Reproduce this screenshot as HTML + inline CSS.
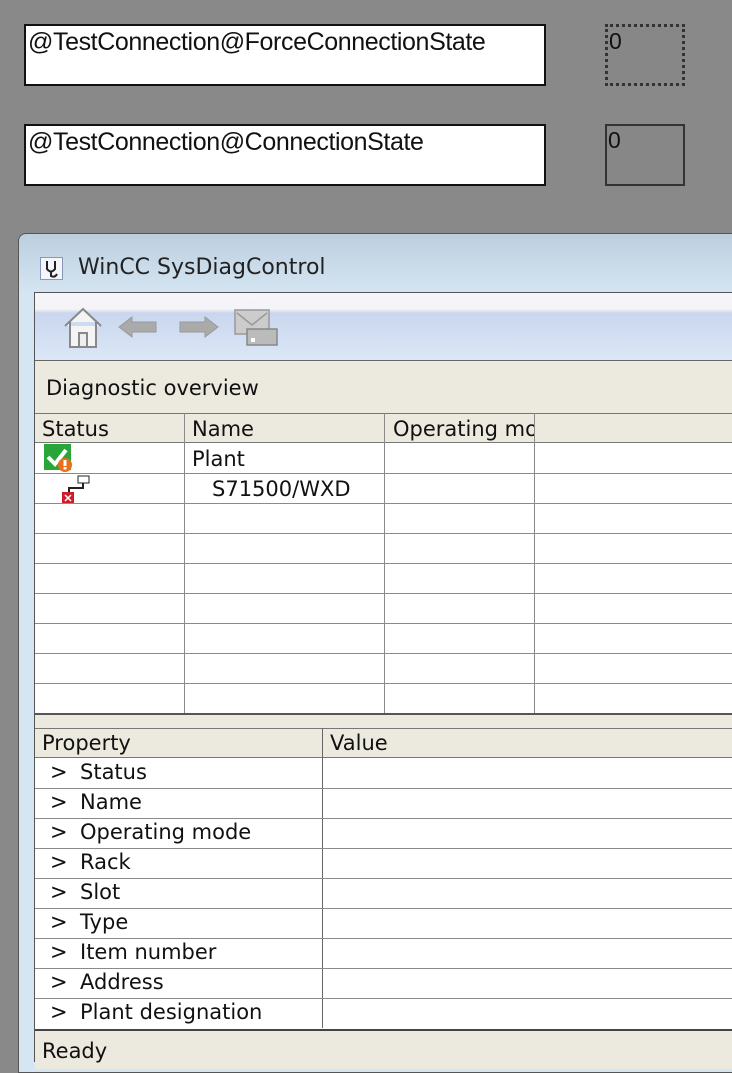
<!DOCTYPE html>
<html><head><meta charset="utf-8"><style>
*{margin:0;padding:0;box-sizing:border-box}
body{width:732px;height:1060px;overflow:hidden;background:#898989;position:relative;font-family:"DejaVu Sans","Liberation Sans",sans-serif}
.a{position:absolute}
.tb{background:#fff;border:2px solid #111;font-family:"Liberation Sans",sans-serif;font-size:25px;line-height:32px;padding-left:2px;color:#111;letter-spacing:-0.4px}
.sb{border:2px solid #333;background:#878787;font-family:"Liberation Sans",sans-serif;font-size:23px;line-height:28px;color:#111;padding-left:1px}
.t{font-size:21px;color:#111;white-space:nowrap}
.hl{height:1px;background:#8a8a8a;left:35px;right:0}
.vl{width:1px;background:#8a8a8a}
.p{position:absolute;left:0;font-size:21px;color:#111;white-space:nowrap}
</style></head><body>
<div class="a tb" style="left:24px;top:24px;width:522px;height:62px">@TestConnection@ForceConnectionState</div>
<div class="a sb" style="left:605px;top:24px;width:80px;height:62px;border:3px dotted #333">0</div>
<div class="a tb" style="left:24px;top:124px;width:522px;height:62px">@TestConnection@ConnectionState</div>
<div class="a sb" style="left:605px;top:124px;width:80px;height:62px">0</div>

<div class="a" style="left:18px;top:233px;width:730px;height:840px;border:1px solid #555;border-radius:8px 0 0 0;background:linear-gradient(#bccfdf,#d5e5f2 60px,#d5e5f2)"></div>
<svg class="a" style="left:40px;top:257px" width="24" height="24"><rect x="0.5" y="0.5" width="22" height="22" fill="#f4f6fb" stroke="#8898b8"/><path d="M7 4 V12 Q11 17 15 12 V4 M11 15 V19 Q15 21 17 17" fill="none" stroke="#222" stroke-width="2"/></svg>
<div class="a t" style="left:78px;top:255px;font-size:22px;color:#222">WinCC SysDiagControl</div>

<div class="a" style="left:34px;top:292px;width:700px;height:770px;border:1px solid #555;background:#fff"></div>
<div class="a" style="left:35px;top:293px;right:0;height:67px;background:linear-gradient(#f6f6fa,#f4f4f8 16px,#c9d6ee 20px,#dce7f6)"></div>
<div class="a" style="left:35px;top:360px;right:0;height:1px;background:#666"></div>
<svg class="a" style="left:62px;top:305px" width="220" height="46" viewBox="0 0 220 46">
 <path d="M3 21 L21 4 L39 21 M8 17 V42 H34 V17" fill="#f4f4f4" stroke="#888" stroke-width="2"/>
 <rect x="17" y="28" width="8" height="14" fill="#eee" stroke="#888" stroke-width="2"/>
 <path d="M57 22 L70 12 V17 H94 V27 H70 V32 Z" fill="#aaa" stroke="#999"/>
 <path d="M156 22 L143 12 V17 H118 V27 H143 V32 Z" fill="#aaa" stroke="#999"/>
 <rect x="173" y="5" width="34" height="24" fill="#ccc" stroke="#999" stroke-width="1.5"/>
 <path d="M175 8 L190 20 L205 8" fill="none" stroke="#999" stroke-width="1.5"/>
 <rect x="185" y="24" width="30" height="16" fill="#bbb" stroke="#888" stroke-width="1.5"/>
 <rect x="189" y="33" width="4" height="4" fill="#fff"/>
</svg>

<div class="a" style="left:35px;top:361px;right:0;height:52px;background:#ece9df"></div>
<div class="a t" style="left:46px;top:376px">Diagnostic overview</div>
<div class="a" style="left:35px;top:413px;right:0;height:30px;background:#ece9df;border-top:1px solid #777;border-bottom:1px solid #777"></div>
<div class="a t" style="left:42px;top:417px">Status</div>
<div class="a t" style="left:192px;top:417px">Name</div>
<div class="a t" style="left:393px;top:417px;width:142px;overflow:hidden">Operating mode</div>
<div class="a vl" style="left:184px;top:413px;height:300px"></div>
<div class="a vl" style="left:384px;top:413px;height:300px"></div>
<div class="a vl" style="left:534px;top:413px;height:300px"></div>
<div class="a hl" style="top:473px"></div><div class="a hl" style="top:503px"></div><div class="a hl" style="top:533px"></div><div class="a hl" style="top:563px"></div><div class="a hl" style="top:593px"></div><div class="a hl" style="top:623px"></div><div class="a hl" style="top:653px"></div><div class="a hl" style="top:683px"></div>
<div class="a t" style="left:192px;top:447px">Plant</div>
<div class="a t" style="left:212px;top:477px">S71500/WXD</div>
<svg class="a" style="left:44px;top:444px" width="30" height="28"><rect x="0" y="0" width="27" height="26" fill="#2aa53a"/><path d="M4 13 L11 20 L22 6" fill="none" stroke="#fff" stroke-width="4"/><circle cx="21" cy="21" r="7" fill="#e8701c"/><rect x="19.5" y="16" width="3" height="6" fill="#fff"/><rect x="19.5" y="23" width="3" height="2.5" fill="#fff"/></svg>
<svg class="a" style="left:60px;top:474px" width="34" height="30"><rect x="18" y="2" width="11" height="7" fill="#fff" stroke="#222"/><path d="M23 9 V14 H9 V20" fill="none" stroke="#222" stroke-width="2"/><rect x="2" y="18" width="12" height="11" fill="#d01c2a"/><path d="M5 21 L11 27 M11 21 L5 27" stroke="#fff" stroke-width="1.5"/></svg>

<div class="a" style="left:35px;top:713px;right:0;height:15px;background:#ece9df;border-top:2px solid #555"></div>
<div class="a" style="left:35px;top:728px;right:0;height:30px;background:#ece9df;border-top:1px solid #777;border-bottom:1px solid #777"></div>
<div class="a t" style="left:42px;top:731px">Property</div>
<div class="a t" style="left:330px;top:731px">Value</div>
<div class="a vl" style="left:322px;top:728px;height:300px;background:#666"></div>
<div class="a hl" style="top:788px"></div><div class="a hl" style="top:818px"></div><div class="a hl" style="top:848px"></div><div class="a hl" style="top:878px"></div><div class="a hl" style="top:908px"></div><div class="a hl" style="top:938px"></div><div class="a hl" style="top:968px"></div><div class="a hl" style="top:998px"></div>
<div class="a" style="left:50px;top:760px;width:300px;height:270px">
<div class="p" style="top:0">&gt;</div><div class="p" style="left:30px;top:0">Status</div>
<div class="p" style="top:30px">&gt;</div><div class="p" style="left:30px;top:30px">Name</div>
<div class="p" style="top:60px">&gt;</div><div class="p" style="left:30px;top:60px">Operating mode</div>
<div class="p" style="top:90px">&gt;</div><div class="p" style="left:30px;top:90px">Rack</div>
<div class="p" style="top:120px">&gt;</div><div class="p" style="left:30px;top:120px">Slot</div>
<div class="p" style="top:150px">&gt;</div><div class="p" style="left:30px;top:150px">Type</div>
<div class="p" style="top:180px">&gt;</div><div class="p" style="left:30px;top:180px">Item number</div>
<div class="p" style="top:210px">&gt;</div><div class="p" style="left:30px;top:210px">Address</div>
<div class="p" style="top:240px">&gt;</div><div class="p" style="left:30px;top:240px">Plant designation</div>
</div>
<div class="a" style="left:35px;top:1029px;right:0;height:40px;background:#ece9df;border-top:2px solid #444"></div>
<div class="a t" style="left:42px;top:1039px">Ready</div>
</body></html>
